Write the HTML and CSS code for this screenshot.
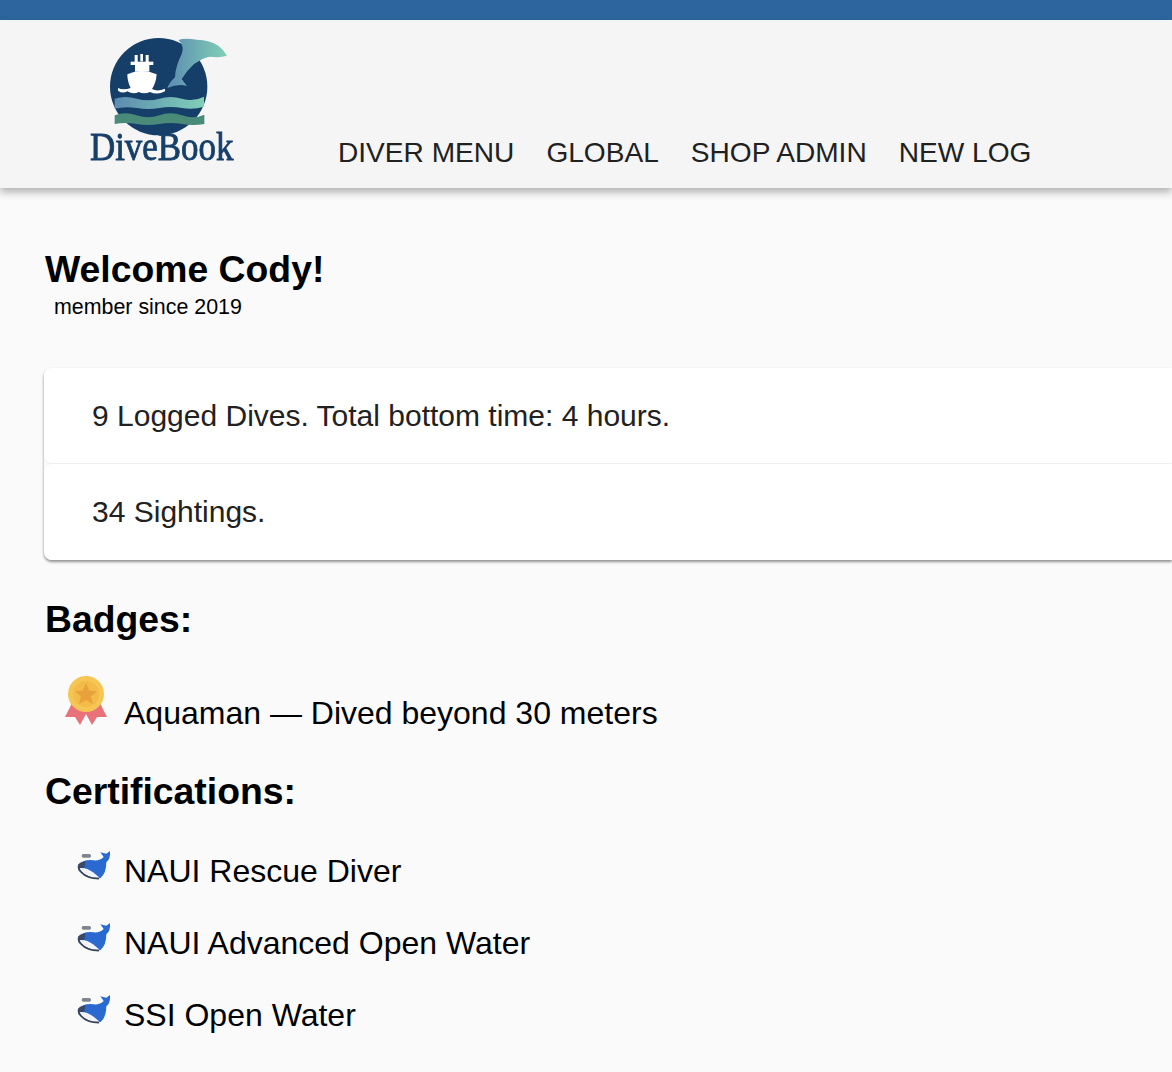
FILE: index.html
```html
<!DOCTYPE html>
<html lang="en">
<head>
    <meta charset="UTF-8">
    <meta name="viewport" content="width=device-width, initial-scale=1.0">
    <title>DiveBook</title>
    <link rel="stylesheet" href="styles.css">
</head>
<body>
    <div class="top-bar"></div>

    <header class="site-header">
        <a class="logo" href="#" aria-label="DiveBook">
            <svg class="logo-img" viewBox="0 0 600 480" width="200" height="160">
                <defs>
                    <linearGradient id="teal" x1="0" y1="0" x2="1" y2="0">
                        <stop offset="0" stop-color="#5d8cb0"/>
                        <stop offset="1" stop-color="#7fd0b8"/>
                    </linearGradient>
                </defs>
                <circle cx="266" cy="200" r="146" fill="#153e68"/>
                <!-- dolphin -->
                <path fill="url(#teal)" d="M325 60 Q345 53 380 59 Q420 60 445 77 Q462 90 471 107 Q450 114 420 110 Q405 112 396 118 L372 132 Q352 150 335 177 L351 198 Q325 190 292 204 Q298 187 315 172 Q316 140 335 102 Q344 78 325 60 Z"/>
                <!-- ship -->
                <g fill="#fff">
                    <rect x="194" y="105" width="9" height="22"/>
                    <rect x="211" y="102" width="8" height="22"/>
                    <rect x="227" y="105" width="9" height="22"/>
                    <rect x="182" y="125" width="68" height="10"/>
                    <rect x="195" y="135" width="43" height="20"/>
                    <path d="M172 163 Q215 143 260 163 Q258 190 246 207 Q262 216 285 206 L285 214 Q262 226 240 216 Q222 224 206 216 Q190 224 172 214 Q158 222 144 212 L144 204 Q160 212 182 204 Q172 185 172 163 Z"/>
                </g>
                <!-- waves -->
                <path fill="url(#teal)" d="M134 236 Q165 226 200 236 T268 236 T336 236 T402 230 L402 260 Q370 270 336 264 T268 264 T200 264 T134 266 Z"/>
                <path fill="#4a8a78" d="M134 286 Q165 274 200 286 T268 286 T336 286 T403 284 L403 312 Q370 318 336 312 T268 312 T200 312 T134 312 Z"/>
                <text class="logo-text" x="60" y="420" textLength="430" lengthAdjust="spacingAndGlyphs">DiveBook</text>
            </svg>
        </a>
        <nav class="main-nav">
            <a href="#">DIVER MENU</a>
            <a href="#">GLOBAL</a>
            <a href="#">SHOP ADMIN</a>
            <a href="#">NEW LOG</a>
        </nav>
    </header>

    <main class="content">
        <h1 class="welcome">Welcome Cody!</h1>
        <p class="member-since">member since 2019</p>

        <div class="stats">
            <div class="stat-card">9 Logged Dives. Total bottom time: 4 hours.</div>
            <div class="stat-card">34 Sightings.</div>
        </div>

        <h2 class="section-title">Badges:</h2>
        <div class="badge-row">
            <svg class="medal" viewBox="0 0 80 60" width="80" height="60">
                <path fill="#e8717a" d="M22 33 L15 47 L25 47 L30 55 L36 44 L42 55 L47 47 L57 47 L50 33 Z"/>
                <circle cx="36" cy="24" r="18" fill="#f6c654"/>
                <circle cx="36" cy="24" r="13" fill="#f3bb48"/>
                <path fill="#e9a23b" d="M36 13 L39.2 20.6 L47 21.2 L41 26.4 L43 34 L36 30 L29 34 L31 26.4 L25 21.2 L32.8 20.6 Z"/>
            </svg>
            <span>Aquaman — Dived beyond 30 meters</span>
        </div>

        <h2 class="section-title certs">Certifications:</h2>
        <ul class="cert-list">
            <li>
                <svg class="whale" viewBox="0 0 180 135" width="60" height="45"><use href="#whale"/></svg>
                <span>NAUI Rescue Diver</span>
            </li>
            <li>
                <svg class="whale" viewBox="0 0 180 135" width="60" height="45"><use href="#whale"/></svg>
                <span>NAUI Advanced Open Water</span>
            </li>
            <li>
                <svg class="whale" viewBox="0 0 180 135" width="60" height="45"><use href="#whale"/></svg>
                <span>SSI Open Water</span>
            </li>
        </ul>
    </main>

    <svg class="icon-defs" width="0" height="0">
        <g id="whale">
            <rect x="50" y="27" width="28" height="11" rx="5" fill="#7f848e"/>
            <path fill="#2a6ad0" d="M40 58 Q60 42 85 46 Q105 48 116 36 L106 22 L124 26 L135 18 Q137 42 124 52 Q124 85 106 100 Q60 100 40 74 Z"/>
            <path fill="#3a4a66" d="M40 58 Q50 50 62 48 L58 68 L41 72 Z"/>
            <path fill="#f2f4f8" d="M42 70 Q62 66 84 82 L104 98 Q62 102 42 70 Z"/>
            <path fill="none" stroke="#3a4250" stroke-width="5" d="M41 62 Q39 72 48 81 Q66 101 102 101"/>
        </g>
    </svg>
</body>
</html>
```

FILE: styles.css
```css
* {
    box-sizing: border-box;
}

body {
    margin: 0;
    background: #fafafa;
    color: #000;
    font-family: "Liberation Sans", Arial, sans-serif;
}

.top-bar {
    height: 20px;
    background: #2d669f;
}

.site-header {
    display: flex;
    align-items: flex-end;
    height: 168px;
    padding-left: 70px;
    background: #f5f5f5;
    box-shadow: 0 4px 8px rgba(0, 0, 0, 0.3);
}

.logo {
    display: block;
    align-self: flex-start;
    width: 252px;
}

.logo-img {
    display: block;
    filter: blur(0.4px);
}

.logo-text {
    font-family: "Liberation Serif", serif;
    font-size: 118px;
    fill: #163f69;
    stroke: #163f69;
    stroke-width: 2.5px;
}

.main-nav {
    display: flex;
    gap: 32px;
    padding: 0 0 18px 16px;
}

.main-nav a {
    color: #212121;
    font-size: 28.1px;
    line-height: 34px;
    text-decoration: none;
}

.content {
    padding: 59px 0 0 44px;
}

.welcome {
    margin: 0 0 0 1px;
    font-size: 37.33px;
    line-height: 44px;
}

.member-since {
    margin: 3px 0 0 10px;
    font-size: 21.4px;
    line-height: 26px;
}

.stats {
    margin-top: 48px;
    border-radius: 8px 0 0 8px;
    box-shadow: 0 2px 3px rgba(0, 0, 0, 0.4);
}

.stat-card {
    height: 96px;
    padding: 0 48px;
    background: #fff;
    border-radius: 8px 0 0 8px;
    box-shadow: 0 1px 3px rgba(0, 0, 0, 0.06);
    color: #212121;
    font-size: 30px;
    line-height: 96px;
}

.stat-card:first-child {
    height: 95px;
    margin-bottom: 1px;
}

.section-title {
    margin: 37px 0 0 1px;
    font-size: 37.33px;
    line-height: 44px;
}

.section-title.certs {
    margin-top: 20px;
}

.badge-row {
    display: flex;
    align-items: center;
    height: 72px;
    margin-top: 36px;
    font-size: 32px;
}

.medal {
    flex: none;
    margin: -26px 0 0 6px;
    filter: blur(0.6px);
}

.badge-row span {
    margin-left: -6px;
}

.cert-list {
    margin: 22px 0 0;
    padding: 0;
    list-style: none;
    font-size: 32px;
}

.cert-list li {
    display: flex;
    align-items: center;
    height: 72px;
}

.whale {
    flex: none;
    margin: -7px -1px 0 21px;
    filter: blur(0.5px);
}

.icon-defs {
    position: absolute;
}
```
